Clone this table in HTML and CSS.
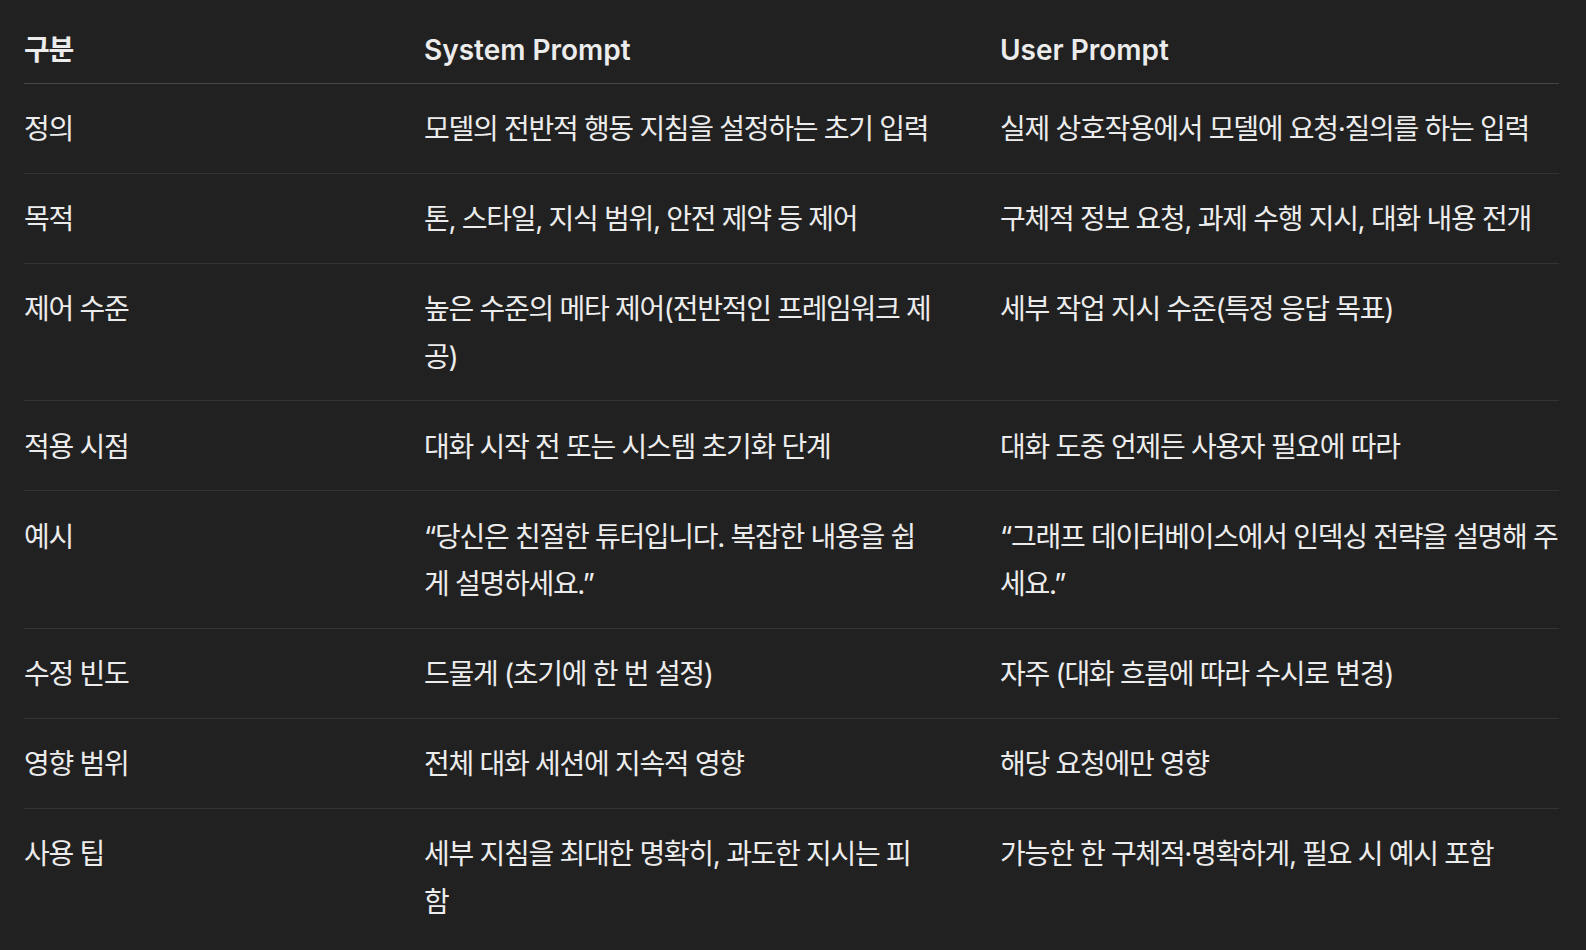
FILE: index.html
```html
<!DOCTYPE html>
<html lang="ko">
<head>
<meta charset="utf-8">
<title>System Prompt vs User Prompt</title>
<link rel="stylesheet" href="styles.css">
</head>
<body>
<table class="cmp">
  <colgroup>
    <col class="c1">
    <col class="c2">
    <col class="c3">
  </colgroup>
  <thead>
    <tr>
      <th class="ko">구분</th>
      <th>System Prompt</th>
      <th>User Prompt</th>
    </tr>
  </thead>
  <tbody>
    <tr><td>정의</td><td>모델의 전반적 행동 지침을 설정하는 초기 입력</td><td>실제 상호작용에서 모델에 요청·질의를 하는 입력</td></tr>
    <tr><td>목적</td><td>톤, 스타일, 지식 범위, 안전 제약 등 제어</td><td>구체적 정보 요청, 과제 수행 지시, 대화 내용 전개</td></tr>
    <tr><td>제어 수준</td><td>높은 수준의 메타 제어(전반적인 프레임워크 제공)</td><td>세부 작업 지시 수준(특정 응답 목표)</td></tr>
    <tr><td>적용 시점</td><td>대화 시작 전 또는 시스템 초기화 단계</td><td>대화 도중 언제든 사용자 필요에 따라</td></tr>
    <tr><td>예시</td><td>“당신은 친절한 튜터입니다. 복잡한 내용을 쉽게 설명하세요.”</td><td>“그래프 데이터베이스에서 인덱싱 전략을 설명해 주세요.”</td></tr>
    <tr><td>수정 빈도</td><td>드물게 (초기에 한 번 설정)</td><td>자주 (대화 흐름에 따라 수시로 변경)</td></tr>
    <tr><td>영향 범위</td><td>전체 대화 세션에 지속적 영향</td><td>해당 요청에만 영향</td></tr>
    <tr><td>사용 팁</td><td>세부 지침을 최대한 명확히, 과도한 지시는 피함</td><td>가능한 한 구체적·명확하게, 필요 시 예시 포함</td></tr>
  </tbody>
</table>
</body>
</html>
```
FILE: styles.css
```css
html, body {
  margin: 0;
  padding: 0;
  background: #212121;
}
body {
  color: #ececec;
  font-family: Inter, "Noto Sans CJK KR", sans-serif;
  font-size: 28px;
  line-height: 47.5px;
}
.cmp {
  margin-left: 24px;
  width: 1535px;
  table-layout: fixed;
  border-collapse: collapse;
  border-spacing: 0;
}
.c1 { width: 400px; }
.c2 { width: 576px; }
.c3 { width: 559px; }
.cmp th {
  text-align: left;
  font-weight: 600;
  padding: 27px 0 8px 0;
  border-bottom: 1.5px solid #474747;
}
.cmp th.ko {
  letter-spacing: -1.3px;
}
.cmp td {
  vertical-align: top;
  padding: 22.5px 0 19px 0;
  letter-spacing: -1.3px;
  border-bottom: 1px solid #333333;
}
.cmp tr td:nth-child(2),
.cmp tr th:nth-child(2) {
  padding-right: 67px;
}
.cmp tbody tr:last-child td {
  border-bottom: none;
}
```
